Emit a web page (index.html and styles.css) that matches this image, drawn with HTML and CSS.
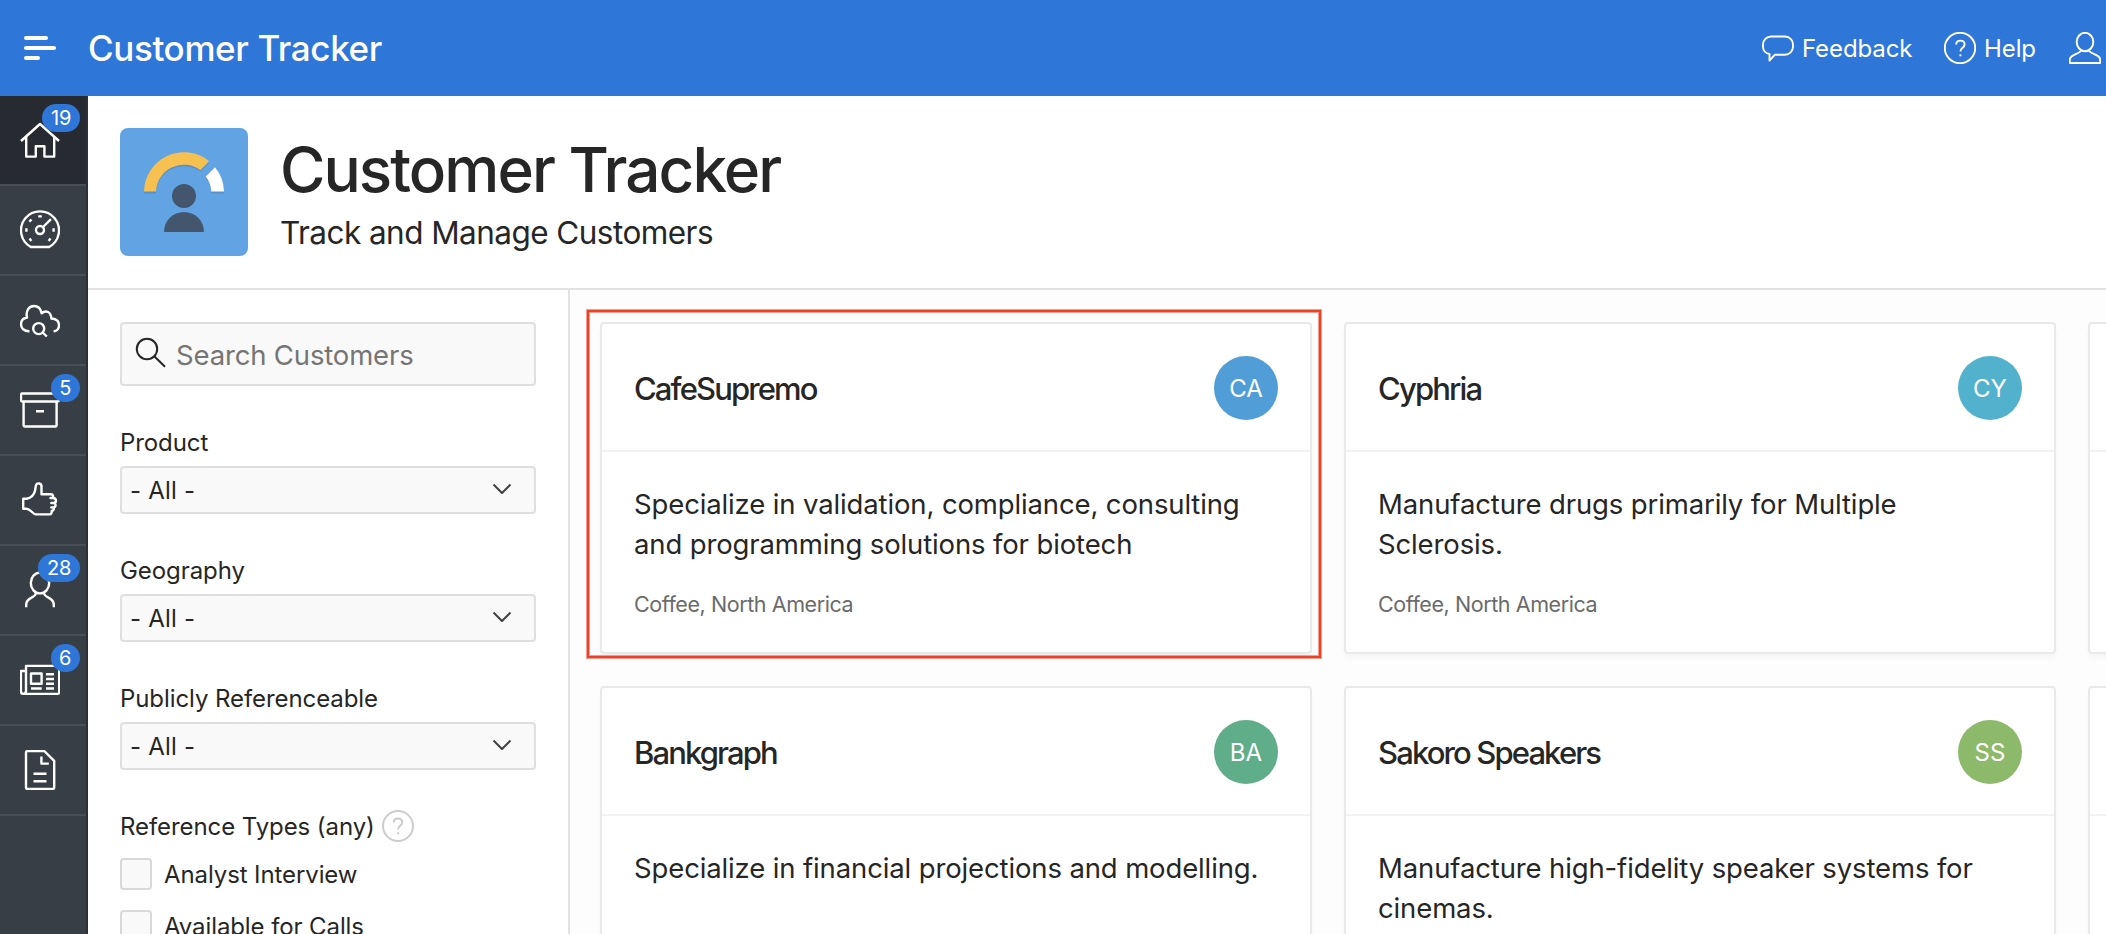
FILE: index.html
```html
<!DOCTYPE html>
<html lang="en">
<head>
<meta charset="utf-8">
<title>Customer Tracker</title>
<link rel="stylesheet" href="styles.css">
</head>
<body>
<header class="topbar">
  <button class="menu-btn" aria-label="Menu"><span class="bar bar-1"></span><span class="bar bar-2"></span><span class="bar bar-3"></span></button>
  <div class="app-name">Customer Tracker</div>
  <nav class="topnav">
    <a class="toplink link-feedback"><svg class="ico32" viewBox="0 0 32 32"><path d="M9 4.500h14a8 8 0 0 1 8 8v2.200a8 8 0 0 1-8 8H13l-5.500 5.800v-6.500C4 21.500 1 18.700 1 14.700v-2.200a8 8 0 0 1 8-8z"/></svg><span class="lbl-feedback">Feedback</span></a>
    <a class="toplink link-help"><svg class="ico32" viewBox="0 0 32 32"><circle cx="16" cy="16" r="15.200"/><path d="M12.200 12.500c0-2.400 1.700-3.900 4.200-3.900s4.200 1.500 4.200 3.800c0 3.400-4.200 3.500-4.200 7.100"/><path d="M16.400 22.300v2"/></svg><span class="lbl-help">Help</span></a>
    <a class="toplink link-user"><svg class="ico32" viewBox="0 0 32 32"><ellipse cx="16" cy="10" rx="8.300" ry="9.200"/><path d="M12 18.300c-.3 4-11.200 3.200-11.200 9.500V31h30.400v-3.200c0-6.300-10.900-5.500-11.200-9.500"/></svg></a>
  </nav>
</header>
<div class="shell">
  <nav class="sidenav">
    <a class="item active"><svg class="ico40" viewBox="0 0 40 40"><path d="M1 21 20 4l19 17"/><path d="M6.200 17v19.600h9.600V26.300h8.600v10.300h9.800V17"/></svg><span class="badge">19</span></a>
    <a class="item"><svg class="ico40" viewBox="0 0 40 40"><path d="M10.800 37A19 19 0 1 1 29.200 37z"/><circle cx="20" cy="20" r="4"/><path d="M23 17 31 9.200"/><path class="tick" d="M18.200 6.400h3.600M6.400 18.200v3.600M33.600 18.200v3.600M9.300 11.700l2.200-2.200M9.500 28.500l1.900 2.400M30.500 28.500l-1.900 2.400"/></svg></a>
    <a class="item"><svg class="ico40" viewBox="0 0 40 40"><path d="M9.500 31.300C4 31.500 1 28 1 24.200c0-3.500 2.400-6 6-6.700C5.500 11 8.800 6 14 6c4 0 6.700 2.500 7.600 7.300C26 9.500 31 12 31.300 18.500c5 .3 7.700 3 7.700 6.700 0 3.300-2 5.800-5.400 6.200"/><circle cx="18.700" cy="28.600" r="5.500"/><path d="M22.700 32.500l4.100 4"/></svg></a>
    <a class="item"><svg class="ico40" viewBox="0 0 40 40"><path d="M2.500 3.500h35a1.500 1.500 0 0 1 1.500 1.500v5a1.500 1.500 0 0 1-1.500 1.500h-35A1.500 1.500 0 0 1 1 10V5a1.500 1.500 0 0 1 1.500-1.500z"/><path d="M3.600 11.500V35a1.500 1.500 0 0 0 1.500 1.500h30a1.500 1.500 0 0 0 1.500-1.500V11.500M16 21.300h8"/></svg><span class="badge">5</span></a>
    <a class="item"><svg class="ico40" viewBox="0 0 40 40"><path d="M3.200 18.700h3.600c4.200-.8 7.200-4 8.200-8 .6-2.500.5-4.500 1.200-6 1-2 5.200-1.800 5.300 1.800V14.300h9.300c2.600 0 3 2.600 1.200 3.700h-1.500H33c3.800.3 4 4.700.3 5h-2 2.500c2.500.6 2.300 4.200-.5 4.400h-2 1.800c1.400 1.200.6 3.300-1.400 3.500.2 2-.4 3.500-2.200 3.500H16c-3.500 0-5.300-5.700-9.500-5.700H3.200z"/></svg></a>
    <a class="item"><svg class="ico40" viewBox="0 0 40 40"><ellipse cx="20" cy="13" rx="9.200" ry="10.400"/><path d="M6.200 37.200V34.500c0-7.500 9.500-6 10-12M33.800 37.200V34.500c0-7.500-9.500-6-10-12"/></svg><span class="badge">28</span></a>
    <a class="item"><svg class="ico40" viewBox="0 0 40 40"><path d="M6 5.900h31.800a1.500 1.500 0 0 1 1.400 1.500v25a1.500 1.500 0 0 1-1.500 1.500H3.500A2.600 2.600 0 0 1 .9 31.300V11H6z"/><path d="M6 11v20.300a2.600 2.600 0 0 1-2.500 2.600"/><path d="M11 13.500h10.600v10.300H11zM26 14.200h8M26 19h8M26 23.800h8M26 28.500h8M11 28.500h10.700"/></svg><span class="badge">6</span></a>
    <a class="item"><svg class="ico40" viewBox="0 0 40 40"><path d="M7.500 1h16.800l9.900 9.900V37.500a1.500 1.500 0 0 1-1.500 1.500H7.500A1.500 1.500 0 0 1 6 37.500v-35A1.500 1.500 0 0 1 7.500 1z"/><path d="M21.400 6.500v7.100h7.400M13.500 23.800h13M13.500 31.300h13"/></svg></a>
  </nav>
  <main class="main">
    <section class="hero">
      <svg class="hero-logo" viewBox="0 0 128 128"><rect width="128" height="128" rx="8" fill="#62a4e3"/><g fill="#5690c9" transform="translate(0 1.500)"><path d="M24 64A40 40 0 0 1 89.200 33.200L80.400 42.300A27.800 27.800 0 0 0 36 64z"/><path d="M95 39.200A40 40 0 0 1 104 64H91.300A27.400 27.400 0 0 0 85.800 48.600z"/></g><path fill="#f6c151" d="M24 63.500A40 40 0 0 1 89.200 33.200L80.400 42.200A27.800 27.800 0 0 0 36 63.500z"/><path fill="#fff" d="M95 39.200A40 40 0 0 1 104 63.500H91.300A27.400 27.400 0 0 0 85.800 48.600z"/><g fill="#44566e"><circle cx="64" cy="68" r="12"/><path d="M44 104a20 20 0 0 1 40 0z"/></g></svg>
      <div class="hero-text"><h1 class="hero-title">Customer Tracker</h1><p class="hero-sub">Track and Manage Customers</p></div>
    </section>
    <div class="columns">
      <aside class="filters">
        <div class="search"><svg class="search-ico" viewBox="0 0 32 32"><circle cx="12" cy="12" r="10.200"/><path d="M19.300 19.300 30 29.700"/></svg><span class="search-ph">Search Customers</span></div>
        <div class="field"><label class="flabel">Product</label><div class="select"><span class="sel-text">- All -</span><svg class="chev" viewBox="0 0 20 12"><path d="M1.500 1.500l8.500 8.500 8.500-8.500"/></svg></div></div>
        <div class="field"><label class="flabel">Geography</label><div class="select"><span class="sel-text">- All -</span><svg class="chev" viewBox="0 0 20 12"><path d="M1.500 1.500l8.500 8.500 8.500-8.500"/></svg></div></div>
        <div class="field"><label class="flabel">Publicly Referenceable</label><div class="select"><span class="sel-text">- All -</span><svg class="chev" viewBox="0 0 20 12"><path d="M1.500 1.500l8.500 8.500 8.500-8.500"/></svg></div></div>
        <div class="field"><label class="flabel types">Reference Types (any)<svg class="help-ico" viewBox="0 0 32 32"><circle cx="16" cy="16" r="15"/><path d="M11.800 12.500c0-2.400 1.700-3.900 4.200-3.900s4.200 1.500 4.200 3.800c0 3.400-4.200 3.500-4.200 7.100"/><path d="M16 22.300v2"/></svg></label>
          <div class="check"><span class="box"></span><span>Analyst Interview</span></div>
          <div class="check"><span class="box"></span><span>Available for Calls</span></div>
        </div>
      </aside>
      <section class="cards">
        <article class="card selected"><div class="card-head"><h3 class="card-title">CafeSupremo</h3><span class="avatar av-blue">CA</span></div><div class="card-body"><p class="desc">Specialize in validation, compliance, consulting<br>and programming solutions for biotech</p><p class="meta">Coffee, North America</p></div></article>
        <article class="card"><div class="card-head"><h3 class="card-title">Cyphria</h3><span class="avatar av-cyan">CY</span></div><div class="card-body"><p class="desc">Manufacture drugs primarily for Multiple<br>Sclerosis.</p><p class="meta">Coffee, North America</p></div></article>
        <article class="card"><div class="card-head"></div><div class="card-body"></div></article>
        <article class="card"><div class="card-head"><h3 class="card-title">Bankgraph</h3><span class="avatar av-green">BA</span></div><div class="card-body"><p class="desc">Specialize in financial projections and modelling.</p></div></article>
        <article class="card"><div class="card-head"><h3 class="card-title">Sakoro Speakers</h3><span class="avatar av-lime">SS</span></div><div class="card-body"><p class="desc">Manufacture high-fidelity speaker systems for<br>cinemas.</p></div></article>
        <article class="card"><div class="card-head"></div><div class="card-body"></div></article>
      </section>
    </div>
  </main>
</div>
</body>
</html>
```
FILE: styles.css
```css
*, *::after { box-sizing: border-box; margin: 0; padding: 0; }
html { height: 934px; overflow: hidden; }
body { width: 2106px; height: 934px; overflow: hidden; font-family: Inter, "Liberation Sans", sans-serif; color: #262626; background: #fdfdfd; display: flex; flex-direction: column; }
svg { fill: none; stroke-linejoin: round; flex: none; display: block; }

.topbar { height: 96px; flex: none; background: #2f76d9; color: #fff; display: flex; align-items: center; padding-left: 24px; }
.menu-btn { border: 0; background: none; width: 64px; display: flex; flex-direction: column; gap: 6px; }
.bar { height: 4px; border-radius: 2px; background: #fff; }
.bar-1 { width: 24px; }
.bar-2 { width: 32px; }
.bar-3 { width: 16px; }
.app-name { font-size: 35px; font-weight: 500; letter-spacing: -0.38px; white-space: nowrap; }
.topnav { margin-left: auto; display: flex; padding-right: 5px; font-size: 24px; letter-spacing: -0.1px; }
.toplink { display: flex; align-items: center; white-space: nowrap; }
.toplink span { margin-left: 8px; }
.link-feedback { width: 182px; }
.link-help { width: 125px; }
.ico32 { width: 32px; height: 32px; stroke: #fff; stroke-width: 1.9; stroke-linecap: butt; }

.shell { display: flex; flex: 1; min-height: 0; overflow: hidden; }
.sidenav { width: 88px; flex: none; background: #373e45; border-right: 2px solid #2b3137; }
.item { position: relative; display: flex; height: 90px; align-items: center; padding-left: 20px; border-bottom: 2px solid #474e56; }
.active { background: #272b31; }
.ico40 { width: 40px; height: 40px; stroke: #fff; stroke-width: 2.4; }
.ico40 .tick { stroke-width: 2.4; }
.badge { position: absolute; top: 8px; right: 6px; height: 28px; min-width: 29px; padding: 0 8.5px; border-radius: 14px; background: #2f76d9; color: #fff; font-size: 20px; line-height: 28px; text-align: center; }

.main { flex: 1; min-width: 0; display: flex; flex-direction: column; }
.hero { height: 194px; flex: none; background: #fff; border-bottom: 2px solid #e2e2e2; display: flex; padding: 32px; }
.hero-logo { width: 128px; height: 128px; margin-right: 32px; }
.hero-title { font-size: 62px; font-weight: 500; line-height: 84px; letter-spacing: -1.95px; white-space: nowrap; }
.hero-sub { font-size: 31.5px; line-height: 42px; letter-spacing: -0.55px; white-space: nowrap; }

.columns { display: flex; flex: 1; min-height: 0; }
.filters { width: 482px; flex: none; background: #fff; border-right: 2px solid #e2e2e2; padding: 32px; overflow: hidden; }
.search { height: 64px; border: 2px solid #dfdfdf; border-radius: 4px; background: #f9f9f9; display: flex; align-items: center; padding-left: 13px; margin-bottom: 40px; }
.search-ico { width: 32px; height: 32px; stroke: #262626; stroke-width: 2; margin-top: -2px; }
.search-ph { font-size: 27.5px; letter-spacing: -0.16px; color: #757575; margin-left: 9px; padding-top: 2px; white-space: nowrap; }
.field { height: 128px; }
.flabel { display: flex; align-items: center; height: 32px; font-size: 24px; letter-spacing: -0.08px; margin-bottom: 8px; white-space: nowrap; }
.types { margin-bottom: 16px; }
.select { height: 48px; border: 2px solid #dfdfdf; border-radius: 4px; background: #f9f9f9; display: flex; align-items: center; justify-content: space-between; padding: 0 22px 0 8px; font-size: 24px; letter-spacing: 0.2px; }
.chev { width: 20px; height: 12px; margin-top: -2px; stroke: #404040; stroke-width: 2; }
.help-ico { width: 32px; height: 32px; margin-left: 7px; stroke: #cccccc; stroke-width: 2; }
.check { display: flex; align-items: center; gap: 12px; height: 32px; margin-bottom: 20px; font-size: 24px; letter-spacing: -0.1px; white-space: nowrap; }
.box { width: 32px; height: 32px; border: 2px solid #d8d8d8; border-radius: 4px; background: #f9f9f9; }

.cards { flex: 1; min-width: 0; display: grid; grid-template-columns: repeat(3, 712px); grid-auto-rows: 332px; gap: 32px; padding: 32px 30px; overflow: hidden; }
.card { position: relative; background: #fff; border: 2px solid #e9e9e9; border-radius: 4px; box-shadow: 0 4px 8px -2px rgba(0, 0, 0, 0.05); }
.selected::after { content: ""; position: absolute; left: -15px; top: -14px; width: 734px; height: 348px; border: 2px solid #ee4023; box-shadow: 0 0 0 1px rgba(238, 64, 35, 0.5), inset 0 0 0 1px rgba(238, 64, 35, 0.5); }
.card-head { height: 128px; border-bottom: 2px solid #f1f1f1; padding: 32px 32px 30px; display: flex; justify-content: space-between; align-items: center; }
.card-title { font-size: 31px; font-weight: 500; letter-spacing: -1.87px; white-space: nowrap; }
.avatar { width: 64px; height: 64px; border-radius: 50%; color: #fff; font-size: 24px; line-height: 65px; text-align: center; }
.av-blue { background: #509dd7; }
.av-cyan { background: #52b2cd; }
.av-green { background: #5fad89; }
.av-lime { background: #8db96b; }
.card-body { padding: 32px; }
.desc { font-size: 27.5px; line-height: 40px; letter-spacing: -0.13px; white-space: nowrap; }
.meta { margin-top: 24px; font-size: 21.5px; line-height: 32px; letter-spacing: -0.42px; color: #6b6b6b; white-space: nowrap; }
```
